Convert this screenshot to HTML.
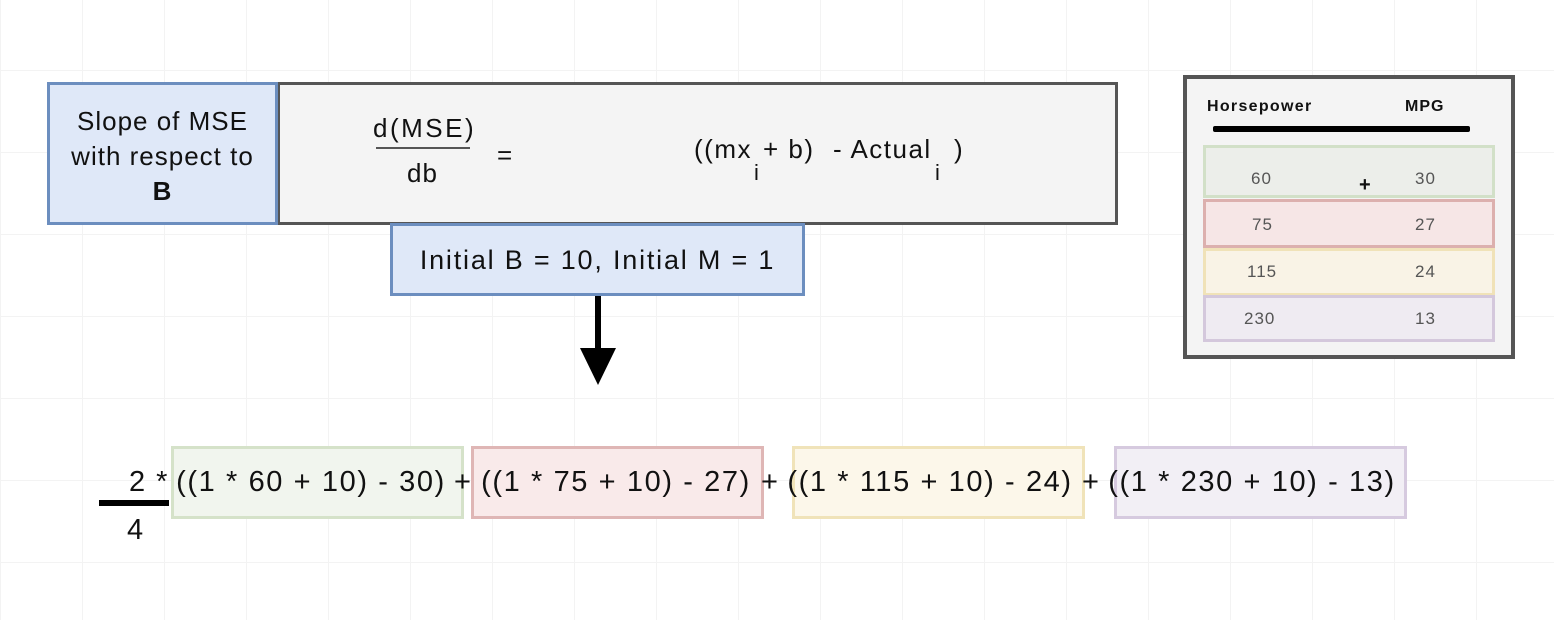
<!DOCTYPE html>
<html><head><meta charset="utf-8"><style>
*{margin:0;padding:0;box-sizing:border-box}
body{width:1554px;height:620px;overflow:hidden;background:#fff;font-family:"Liberation Sans",Arial,sans-serif;color:#111;position:relative;
background-image:linear-gradient(#f3f3f3 1px,transparent 1px),linear-gradient(90deg,#f3f3f3 1px,transparent 1px);background-size:82px 82px;background-position:0 -12px}
.a{position:absolute}
.t{position:absolute;white-space:nowrap}
.seg{position:absolute;top:466px;width:300px;text-align:center;font-size:29px;letter-spacing:1.6px;white-space:nowrap}
</style></head><body>
<div class="a" style="left:277px;top:82px;width:841px;height:143px;background:#f4f4f4;border:3px solid #555"></div>
<div class="a" style="left:47px;top:82px;width:231px;height:143px;background:#dfe8f8;border:3px solid #6c8ebf"></div>
<div class="t" style="left:47px;top:104px;width:231px;text-align:center;font-size:26px;line-height:35px;letter-spacing:1px">Slope of MSE<br>with respect to<br><b>B</b></div>
<div class="t" style="left:373px;top:113px;font-size:26px;letter-spacing:2.5px">d(MSE)</div>
<div class="a" style="left:376px;top:147px;width:94px;height:2px;background:#555"></div>
<div class="t" style="left:407px;top:158px;font-size:26px;letter-spacing:1px">db</div>
<div class="t" style="left:497px;top:140px;font-size:26px">=</div>
<div class="t" style="left:694px;top:134px;font-size:26px;letter-spacing:1.5px">((mx</div>
<div class="t" style="left:754px;top:160px;font-size:22px">i</div>
<div class="t" style="left:763px;top:134px;font-size:26px;letter-spacing:1.5px">+ b)</div>
<div class="t" style="left:833px;top:134px;font-size:26px;letter-spacing:1.5px">- Actual</div>
<div class="t" style="left:935px;top:160px;font-size:22px">i</div>
<div class="t" style="left:954px;top:134px;font-size:26px">)</div>
<div class="a" style="left:390px;top:223px;width:415px;height:73px;background:#dfe8f8;border:3px solid #6c8ebf"></div>
<div class="t" style="left:390px;top:245px;width:415px;text-align:center;font-size:27px;letter-spacing:1.8px">Initial B = 10, Initial M = 1</div>
<div class="a" style="left:595px;top:296px;width:6px;height:58px;background:#000"></div>
<svg class="a" style="left:578px;top:348px" width="40" height="38"><polygon points="2,0 38,0 20,37" fill="#000"/></svg>

<div class="a" style="left:1183px;top:75px;width:332px;height:284px;background:#f4f4f4;border:4px solid #555"></div>
<div class="t" style="left:1207px;top:98px;font-size:16px;font-weight:bold;letter-spacing:1.3px">Horsepower</div>
<div class="t" style="left:1405px;top:98px;font-size:16px;font-weight:bold;letter-spacing:1px">MPG</div>
<div class="a" style="left:1213px;top:126px;width:257px;height:6px;background:#000;border-radius:2px"></div>
<div class="a" style="left:1203px;top:145px;width:292px;height:53px;background:#eceeea;border:3px solid #d2e0c8"></div>
<div class="a" style="left:1203px;top:199px;width:292px;height:49px;background:#f6e6e6;border:3px solid #dcb0ae"></div>
<div class="a" style="left:1203px;top:248px;width:292px;height:48px;background:#f9f3e6;border:3px solid #f0e2b8"></div>
<div class="a" style="left:1203px;top:295px;width:292px;height:47px;background:#efebf2;border:3px solid #d4c8dc"></div>
<div class="t" style="left:1251px;top:169px;font-size:17px;color:#555;letter-spacing:1px">60</div><div class="t" style="left:1415px;top:169px;font-size:17px;color:#555;letter-spacing:1px">30</div>
<div class="t" style="left:1252px;top:215px;font-size:17px;color:#555;letter-spacing:1px">75</div><div class="t" style="left:1415px;top:215px;font-size:17px;color:#555;letter-spacing:1px">27</div>
<div class="t" style="left:1247px;top:262px;font-size:17px;color:#555;letter-spacing:1px">115</div><div class="t" style="left:1415px;top:262px;font-size:17px;color:#555;letter-spacing:1px">24</div>
<div class="t" style="left:1244px;top:309px;font-size:17px;color:#555;letter-spacing:1px">230</div><div class="t" style="left:1415px;top:309px;font-size:17px;color:#555;letter-spacing:1px">13</div>
<div class="t" style="left:1359px;top:174px;font-size:20px;font-weight:bold">+</div>

<div class="a" style="left:171px;top:446px;width:293px;height:73px;background:#f1f5ee;border:3px solid #d5e2c9"></div>
<div class="a" style="left:471px;top:446px;width:293px;height:73px;background:#f9eaea;border:3px solid #dfb6b5"></div>
<div class="a" style="left:792px;top:446px;width:293px;height:73px;background:#fcf7ea;border:3px solid #f0e3b9"></div>
<div class="a" style="left:1114px;top:446px;width:293px;height:73px;background:#f2eff5;border:3px solid #d6cadf"></div>
<div class="a" style="left:99px;top:500px;width:70px;height:6px;background:#000"></div>
<div class="t" style="left:129px;top:466px;font-size:29px;letter-spacing:1.5px">2 *</div>
<div class="t" style="left:127px;top:514px;font-size:29px">4</div>
<div class="seg" style="left:161px">((1 * 60 + 10) - 30)</div>
<div class="seg" style="left:466px">((1 * 75 + 10) - 27)</div>
<div class="seg" style="left:780px">((1 * 115 + 10) - 24)</div>
<div class="seg" style="left:1102px">((1 * 230 + 10) - 13)</div>
<div class="t" style="left:454px;top:466px;font-size:29px">+</div>
<div class="t" style="left:761px;top:466px;font-size:29px">+</div>
<div class="t" style="left:1082px;top:466px;font-size:29px">+</div>
</body></html>
